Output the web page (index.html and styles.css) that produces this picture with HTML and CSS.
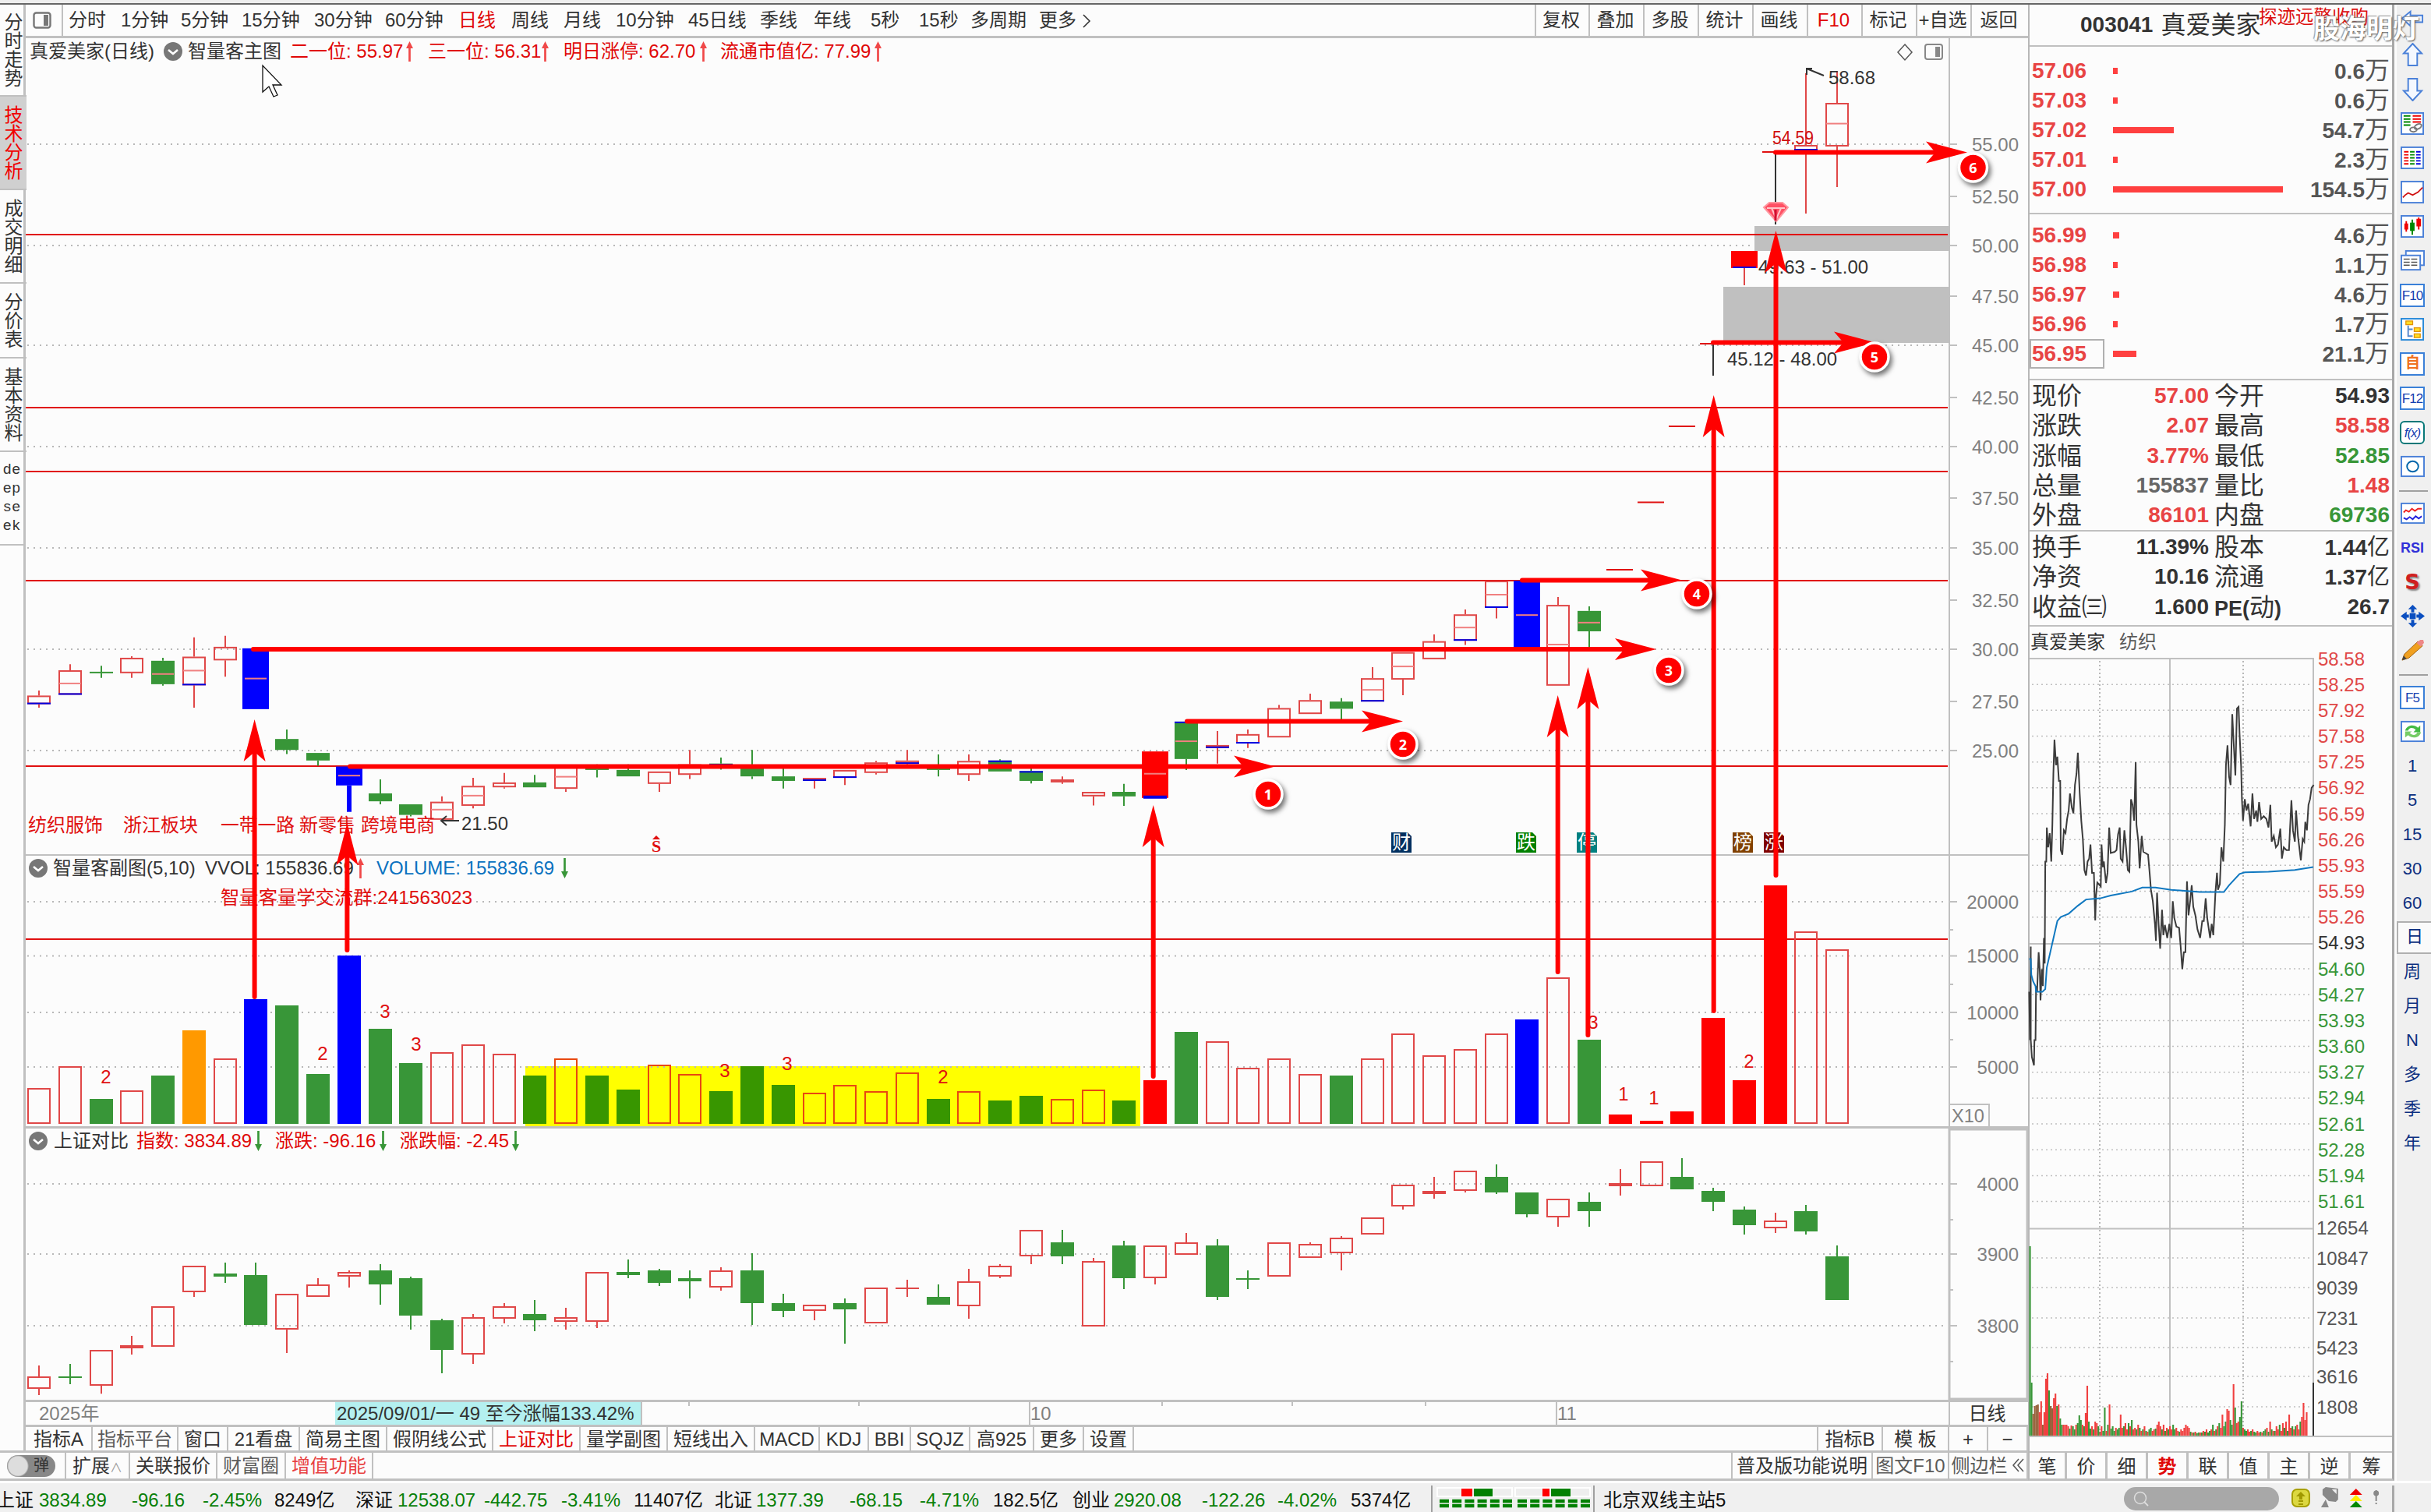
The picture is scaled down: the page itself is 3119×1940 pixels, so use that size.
FILE: index.html
```html
<!DOCTYPE html>
<html lang="zh-CN">
<head>
  <meta charset="UTF-8" />
  <meta name="viewport" content="width=device-width, initial-scale=1.0" />
  <title>真爱美家 003041 技术分析</title>
  <link rel="stylesheet" href="styles.css">
</head>
<body>
  <div class="app">
    <div class="top-strip"></div>

    <div class="main">
      <div class="left-col">
        <div class="workspace">
          <!-- Vertical page tabs -->
          <nav class="side-tabs">
            <div class="t1">分时走势</div>
            <div class="t2 active">技术分析</div>
            <div class="t2">成交明细</div>
            <div class="t3">分价表</div>
            <div class="t2">基本资料</div>
            <div class="t2 latin">de<br>ep<br>se<br>ek</div>
          </nav>

          <div class="charts">
            <div class="toolbar">
              <div class="tool-icon">
                <svg width="24" height="22" viewBox="0 0 24 22"><rect x="1.5" y="1.5" width="21" height="19" rx="3" fill="none" stroke="#777" stroke-width="2.4"/><rect x="14" y="4" width="6" height="14" fill="#777"/></svg>
              </div>
              <div class="periods">
                <span>分时</span><span>1分钟</span><span>5分钟</span><span>15分钟</span><span>30分钟</span><span>60分钟</span><span class="red">日线</span><span>周线</span><span>月线</span><span>10分钟</span><span>45日线</span><span>季线</span><span>年线</span><span>5秒</span><span>15秒</span><span>多周期</span><span>更多<svg width="14" height="20" viewBox="0 0 14 20"><path d="M3 2l8 8-8 8" fill="none" stroke="#333" stroke-width="1.6"/></svg></span>
              </div>
              <div class="actions">
                <span>复权</span><span>叠加</span><span>多股</span><span>统计</span><span>画线</span><span class="red">F10</span><span>标记</span><span>+自选</span><span>返回</span>
              </div>
            </div>

            <section class="panel price-panel">
              <svg id="price" viewBox="33 49 2569 1047"></svg>
              <div class="panel-head head-price">
                <span>真爱美家(日线)</span>
                <i class="dot"><svg width="24" height="24" viewBox="0 0 24 24"><path d="M6 10l6 5 6-5" fill="none" stroke="#fff" stroke-width="2.6"/></svg></i>
                <span>智量客主图</span>
                <span class="red">二一位: 55.97</span><i class="up"></i>
                <span class="red">三一位: 56.31</span><i class="up"></i>
                <span class="red">明日涨停: 62.70</span><i class="up"></i>
                <span class="red">流通市值亿: 77.99</span><i class="up"></i>
              </div>
            </section>

            <section class="panel volume-panel">
              <svg id="volume" viewBox="33 1098 2569 347"></svg>
              <div class="panel-head head-volume">
                <i class="dot"><svg width="24" height="24" viewBox="0 0 24 24"><path d="M6 10l6 5 6-5" fill="none" stroke="#fff" stroke-width="2.6"/></svg></i>
                <span>智量客副图(5,10)</span>
                <span>VVOL: 155836.69</span><i class="up"></i>
                <span class="blue">VOLUME: 155836.69</span><i class="down"></i>
              </div>
            </section>

            <section class="panel index-panel">
              <svg id="index" viewBox="33 1448 2569 348"></svg>
              <div class="panel-head head-index">
                <i class="dot"><svg width="24" height="24" viewBox="0 0 24 24"><path d="M6 10l6 5 6-5" fill="none" stroke="#fff" stroke-width="2.6"/></svg></i>
                <span>上证对比</span>
                <span class="red">指数: 3834.89</span><i class="down"></i>
                <span class="red">涨跌: -96.16</span><i class="down"></i>
                <span class="red">涨跌幅: -2.45</span><i class="down"></i>
              </div>
            </section>

            <div class="time-axis">
              <span class="muted year">2025年</span>
              <span class="range">2025/09/01/一 49 至今涨幅133.42%</span>
              <span class="tick"></span><span class="tick"></span>
              <span class="month">10</span>
              <span class="tick"></span><span class="tick"></span><span class="tick"></span>
              <span class="month">11</span>
              <span class="period">日线</span>
            </div>

            <div class="ind-tabs">
              <span>指标A</span><span class="soft">指标平台</span><span>窗口</span><span>21看盘</span><span>简易主图</span><span>假阴线公式</span><span class="red">上证对比</span><span>量学副图</span><span>短线出入</span><span>MACD</span><span>KDJ</span><span>BBI</span><span>SQJZ</span><span>高925</span><span>更多</span><span>设置</span>
              <span></span>
              <span>指标B</span><span>模 板</span><span>+</span><span>−</span>
            </div>
          </div>
        </div>

        <div class="ext-tabs">
          <span><i class="toggle">弹</i></span>
          <span>扩展<small>∧</small></span><span>关联报价</span><span class="soft">财富圈</span><span class="hot">增值功能</span>
          <span></span>
          <span>普及版功能说明</span><span class="soft">图文F10</span><span class="soft">侧边栏<svg width="22" height="18" viewBox="0 0 22 18"><path d="M14 1L7 9l7 8M20 1l-7 8 7 8" fill="none" stroke="#555" stroke-width="1.5"/></svg></span>
        </div>
      </div>

      <!-- Quote panel -->
      <aside class="quote">
        <div class="quote-title"><b>003041</b><span>真爱美家</span></div>
        <div class="book asks">
          <div class="lvl"><b>57.06</b><i><u style="width:6px"></u></i><em>0.6<span>万</span></em></div>
          <div class="lvl"><b>57.03</b><i><u style="width:6px"></u></i><em>0.6<span>万</span></em></div>
          <div class="lvl"><b>57.02</b><i><u style="width:78px"></u></i><em>54.7<span>万</span></em></div>
          <div class="lvl"><b>57.01</b><i><u style="width:6px"></u></i><em>2.3<span>万</span></em></div>
          <div class="lvl"><b>57.00</b><i><u style="width:218px"></u></i><em>154.5<span>万</span></em></div>
        </div>
        <div class="book bids">
          <div class="lvl"><b>56.99</b><i><u style="width:8px"></u></i><em>4.6<span>万</span></em></div>
          <div class="lvl"><b>56.98</b><i><u style="width:6px"></u></i><em>1.1<span>万</span></em></div>
          <div class="lvl"><b>56.97</b><i><u style="width:8px"></u></i><em>4.6<span>万</span></em></div>
          <div class="lvl"><b>56.96</b><i><u style="width:6px"></u></i><em>1.7<span>万</span></em></div>
          <div class="lvl boxed"><b>56.95</b><i><u style="width:30px"></u></i><em>21.1<span>万</span></em></div>
        </div>
        <div class="stats s1">
          <span>现价</span><b class="r">57.00</b><span>今开</span><b>54.93</b>
          <span>涨跌</span><b class="r">2.07</b><span>最高</span><b class="r">58.58</b>
          <span>涨幅</span><b class="r">3.77%</b><span>最低</span><b class="g">52.85</b>
          <span>总量</span><b class="s">155837</b><span>量比</span><b class="r">1.48</b>
          <span>外盘</span><b class="r">86101</b><span>内盘</span><b class="g">69736</b>
        </div>
        <div class="stats s2">
          <span>换手</span><b>11.39%</b><span>股本</span><b>1.44<span>亿</span></b>
          <span>净资</span><b>10.16</b><span>流通</span><b>1.37<span>亿</span></b>
          <span>收益㈢</span><b>1.600</b><span><b>PE(</b>动<b>)</b></span><b>26.7</b>
        </div>
        <div class="mini-title"><span>真爱美家</span><span class="soft">纺织</span></div>
        <svg id="intraday" viewBox="2604 844 465 1018"></svg>
        <div class="quote-tabs">
          <span>笔</span><span>价</span><span>细</span><span class="red strong">势</span><span>联</span><span>值</span><span>主</span><span>逆</span><span>筹</span>
        </div>
        <div class="notice">探迹远擎收购</div>
      </aside>

      <!-- Right tool strip -->
      <aside class="strip">
        <div><svg viewBox="0 0 32 32"><path d="M2 13L13 4v5h16v9H13v5z" fill="#f4f8ff" stroke="#4a80d8" stroke-width="2"/></svg></div>
        <div><svg viewBox="0 0 32 32"><path d="M16 1L28 14h-6v16H10V14H4z" fill="#f4f8ff" stroke="#4a80d8" stroke-width="2"/></svg></div>
        <div><svg viewBox="0 0 32 32"><path d="M16 31L28 18h-6V2H10v16H4z" fill="#f4f8ff" stroke="#4a80d8" stroke-width="2"/></svg></div>
        <div><svg viewBox="0 0 32 32"><rect x="1" y="2" width="29" height="28" fill="#fff" stroke="#4a80d8" stroke-width="2"/><path d="M4 6h9M4 10h9M4 14h9M4 18h9" stroke="#080" stroke-width="2"/><path d="M16 6h11M16 10h11M16 14h11" stroke="#e00" stroke-width="2"/><ellipse cx="17" cy="24" rx="4.500" ry="3" fill="#fff" stroke="#777" stroke-width="2"/><ellipse cx="23" cy="20" rx="5" ry="3" fill="none" stroke="#777" stroke-width="2" transform="rotate(-30 23 20)"/></svg></div>
        <div><svg viewBox="0 0 32 32"><rect x="1" y="2" width="29" height="28" fill="#fff" stroke="#4a80d8" stroke-width="2"/><path d="M7.500 7v18" stroke="#e00" stroke-width="6" stroke-dasharray="2 2"/><path d="M15.500 7v18" stroke="#080" stroke-width="6" stroke-dasharray="2 2"/><path d="M23.500 7v18" stroke="#00d" stroke-width="6" stroke-dasharray="2 2"/></svg></div>
        <div><svg viewBox="0 0 32 32"><rect x="1" y="2" width="29" height="28" fill="#fff" stroke="#4a80d8" stroke-width="2"/><path d="M3 23l3-3 4-3 6 3 7-4 6-6" fill="none" stroke="#d01010" stroke-width="1.800"/></svg></div>
        <div><svg viewBox="0 0 32 32"><rect x="1" y="2" width="29" height="28" fill="#fff" stroke="#4a80d8" stroke-width="2"/><path d="M7.500 9v14M24 4v16" stroke="#e00" stroke-width="2"/><path d="M15.500 7v20" stroke="#080" stroke-width="2"/><path d="M5 12h5v8H5zM21 6h6v10h-6z" fill="#e00"/><path d="M12.500 11h6v11h-6z" fill="#080"/></svg></div>
        <div><svg viewBox="0 0 32 32"><rect x="7" y="3" width="24" height="19" fill="#fff" stroke="#4a80d8" stroke-width="2"/><rect x="1" y="9" width="25" height="19" fill="#fff" stroke="#4a80d8" stroke-width="2"/><path d="M4 14h8M14 14h8M4 18h8M14 18h8M4 22h8M14 22h8" stroke="#555" stroke-width="1.600"/></svg></div>
        <div><span class="key">F10</span></div>
        <div><svg viewBox="0 0 32 32"><rect x="1" y="2" width="29" height="28" fill="#fff" stroke="#2a8ad8" stroke-width="2"/><path d="M7 5h9v5H7zM18 14h8v5h-8zM18 22h8v5h-8z" fill="#fd2" stroke="#e09000" stroke-width="1.300"/><path d="M10 11v14h6M10 16h6" fill="none" stroke="#58c" stroke-width="2"/></svg></div>
        <div><span class="key orange">自</span></div>
        <div><span class="key">F12</span></div>
        <div><span class="key fx">f(x)</span></div>
        <div><svg viewBox="0 0 32 32"><rect x="1" y="3" width="30" height="26" fill="#fff" stroke="#4a80d8" stroke-width="2"/><ellipse cx="16" cy="16" rx="7.500" ry="7" fill="none" stroke="#06a" stroke-width="2"/></svg></div>
        <hr>
        <div><svg viewBox="0 0 32 32"><rect x="1" y="3" width="30" height="26" fill="#fff" stroke="#4a80d8" stroke-width="2"/><path d="M4 15l3-3 4 2 4-4 4 3 4-3 5 0" fill="none" stroke="#e22" stroke-width="2"/><path d="M4 22l4 2 4-3 4 3 4-4 4 3 4-3" fill="none" stroke="#22d" stroke-width="2"/></svg></div>
        <div><span class="rsi">RSI</span></div>
        <div><span class="money">S</span></div>
        <div><svg viewBox="0 0 32 32"><path d="M16 1l6 6h-4v4h-4V7h-4zM16 31l6-6h-4v-4h-4v4h-4zM0 16l8-6v4h3v4H8v4zM32 16l-8-6v4h-3v4h3v4z" fill="#0b4fc0"/><rect x="12" y="12" width="8" height="8" fill="#0b4fc0"/></svg></div>
        <div><svg viewBox="0 0 32 32"><path d="M2 29l3-8L23 4l6 6L11 26z" fill="#f0a020" stroke="#a06010" stroke-width="1"/><path d="M21 6l5-4h4l1 4-4 5z" fill="#e88"/><path d="M2 29l2-6 4 4z" fill="#444"/></svg></div>
        <hr>
        <div><span class="key">F5</span></div>
        <div><svg viewBox="0 0 32 32"><rect x="1" y="3" width="30" height="26" fill="#fff" stroke="#4a80d8" stroke-width="2"/><path d="M6 15c2-8 12-9 17-4l3-3v9h-9l3-3c-4-4-9-3-10 1z" fill="#4b4"/><path d="M27 17c-2 8-12 9-17 4l-4 3v-8h9l-3 2c4 4 9 3 10-1z" fill="#7c6"/></svg></div>
        <div>1</div><div>5</div><div>15</div><div>30</div><div>60</div>
        <div class="on">日</div><div>周</div><div>月</div><div>N</div><div>多</div><div>季</div><div>年</div>
      </aside>
    </div>

    <footer class="status">
      <div class="quotes">
        <span>上证</span><span class="g">3834.89</span><span class="g">-96.16</span><span class="g">-2.45%</span><span>8249亿</span>
        <span>深证</span><span class="g">12538.07</span><span class="g">-442.75</span><span class="g">-3.41%</span><span>11407亿</span>
        <span>北证</span><span class="g">1377.39</span><span class="g">-68.15</span><span class="g">-4.71%</span><span>182.5亿</span>
        <span>创业</span><span class="g">2920.08</span><span class="g">-122.26</span><span class="g">-4.02%</span><span>5374亿</span>
      </div>
      <div class="leds">
        <svg width="200" height="32" viewBox="1842 1906 200 32">
          <path d="M1844 1909h96v11h-96zM1944 1909h96v11h-96z" fill="#eee" stroke="#fff" stroke-width="2"/>
          <path d="M1875 1910h14v10h-14zM1979 1910h9v10h-9z" fill="#f00"/>
          <path d="M1891 1910h24v10h-24zM1990 1910h25v10h-25z" fill="#008000"/>
          <path d="M1847 1926h93M1947 1926h93M1847 1932h93M1947 1932h93" stroke="#008000" stroke-width="4.500" stroke-dasharray="12 4.200"/>
        </svg>
      </div>
      <div class="site">北京双线主站5</div>
      <div class="tray">
        <div class="search"><svg width="22" height="22" viewBox="0 0 22 22"><circle cx="9" cy="9" r="7.500" fill="none" stroke="#ddd" stroke-width="1.500"/><path d="M14 14l5 5" stroke="#ddd" stroke-width="1.800"/></svg></div>
        <svg width="130" height="34" viewBox="2940 1906 130 34">
          <rect x="2942" y="1911" width="22" height="22" rx="6" fill="#dcd840" stroke="#a8a000" stroke-width="2"/><path d="M2953 1914l6 6h-4v4h-4v-4h-4z" fill="#a09800"/><path d="M2950 1926h6M2950 1930h6" stroke="#a09800" stroke-width="2"/>
          <path d="M2981 1911l4-3 16 2v14l-3 3-9-1-8-8z" fill="#888"/><path d="M2993 1911h6v6z" fill="#f0f0f0"/><path d="M2979 1934h10l-4-10z" fill="#888"/>
          <path d="M3024 1910l8 8h-16z" fill="#e00"/><path d="M3024 1918l8 8h-16z" fill="#fe0"/><path d="M3024 1926l8 8h-16z" fill="#080"/>
          <circle cx="3050" cy="1916" r="3.500" fill="#888"/><path d="M3050 1912v14M3050 1928v2" stroke="#888" stroke-width="2"/>
        </svg>
      </div>
    </footer>

    <!-- Drawn annotations, over every panel -->
    <svg id="notes" class="notes" viewBox="0 0 3119 1940"></svg>
    <div class="watermark">股海明灯</div>
  </div>
  <script src="charts.js"></script>
</body>
</html>
```

FILE: styles.css
```css
* {
  box-sizing: border-box;
}
body {
  margin: 0;
  background: #fcfcfc;
  color: #333;
  font-family: "Liberation Sans", "Noto Sans CJK SC", sans-serif;
  font-size: 24px;
  line-height: 28px;
  white-space: nowrap;
  overflow: hidden;
}
i, em, u {
  font-style: normal;
  text-decoration: none;
}
svg {
  display: block;
}
svg text {
  font-size: 24px;
  white-space: pre;
}
.red {
  color: #e00808;
}
.blue {
  color: #0a72c0;
}
.soft {
  color: #5a5a5a;
}
.muted {
  color: #808080;
}
.hot {
  color: #e84040;
}
.app {
  position: relative;
  width: 3119px;
  height: 1940px;
  display: flex;
  flex-direction: column;
}
.top-strip {
  height: 6px;
  background: #eee;
  border-bottom: 2px solid #666;
}
.main {
  display: flex;
  height: 1894px;
}
.left-col {
  width: 2602px;
}
.workspace {
  display: flex;
  height: 1858px;
  border-bottom: 3px solid #c0c0c0;
}

/* left tabs */
.side-tabs {
  width: 33px;
  border-right: 3px solid #c0c0c0;
}
.side-tabs div {
  display: flex;
  align-items: center;
  justify-content: center;
  border-bottom: 2px solid #c0c0c0;
  writing-mode: vertical-rl;
  text-orientation: upright;
  line-height: 30px;
  padding-right: 4px;
}
.side-tabs .t1 {
  height: 118px;
}
.side-tabs .t2 {
  height: 120px;
}
.side-tabs .t3 {
  height: 96px;
}
.side-tabs .active {
  background: #d0d0d0;
  color: #f00000;
}
.side-tabs .latin {
  writing-mode: horizontal-tb;
  font-family: "Liberation Mono", monospace;
  font-size: 19px;
  line-height: 24px;
  padding-right: 0;
}

/* toolbar */
.charts {
  width: 2569px;
}
.toolbar {
  display: flex;
  height: 43px;
  border-bottom: 3px solid #c0c0c0;
  line-height: 40px;
}
.tool-icon {
  width: 48px;
  padding: 9px 0 0 9px;
  border-right: 2px solid #c0c0c0;
}
.periods {
  display: grid;
  grid-template-columns: 67px 77px 78px 93px 91px 94px 68px 67px 67px 93px 92px 69px 73px 62px 66px 88px 80px;
  padding-left: 7px;
  flex: 1;
}
.periods svg {
  display: inline-block;
  vertical-align: -3px;
  margin-left: 6px;
}
.actions {
  display: grid;
  grid-template-columns: 69px repeat(7, 70px) 74px;
  text-align: center;
}
.actions span {
  border-left: 2px solid #c0c0c0;
  padding-right: 3px;
}

/* chart panels: svg and head share one cell */
.panel {
  display: grid;
}
.panel > * {
  grid-area: 1 / 1;
}
.panel > svg {
  width: 2569px;
  height: 100%;
}
.price-panel {
  height: 1047px;
}
.volume-panel {
  height: 349px;
  border-top: 2px solid #c0c0c0;
}
.index-panel {
  height: 351px;
  border-top: 3px solid #c0c0c0;
}
.panel-head {
  display: grid;
  align-items: center;
  height: 32px;
}
.head-price {
  grid-template-columns: 172px 31px 131px 146px 31px 143px 31px 172px 29px 195px 20px;
  padding: 2px 0 0 5px;
}
.head-volume {
  grid-template-columns: 31px 195px 190px 30px 228px 20px;
  padding-left: 4px;
}
.head-index {
  grid-template-columns: 32px 106px 149px 29px 131px 29px 141px 20px;
  padding-left: 4px;
}
.dot {
  width: 24px;
  height: 24px;
  border-radius: 50%;
  background: #777;
}
.up, .down {
  width: 9px;
  height: 26px;
  margin-left: 3px;
  background: #f04848;
  clip-path: polygon(50% 0, 100% 9px, 65% 9px, 65% 100%, 35% 100%, 35% 9px, 0 9px);
}
.down {
  background: #389638;
  clip-path: polygon(35% 0, 65% 0, 65% 17px, 100% 17px, 50% 100%, 0 17px, 35% 17px);
}
.head-volume .up {
  margin-left: 5px;
}
.head-volume .down {
  margin-left: 9px;
}

/* time axis and tab rows */
.time-axis {
  display: grid;
  grid-template-columns: 397px 453px 218px 219px 170px 167px 171px 168px 504px 102px;
  height: 35px;
  border-top: 3px solid #c0c0c0;
  border-bottom: 3px solid #c0c0c0;
  line-height: 29px;
  color: #808080;
}
.time-axis .year {
  padding-left: 17px;
}
.time-axis .range {
  width: 394px;
  padding-left: 2px;
  background: #b4f0f0;
  border-right: 2px solid #c0c0c0;
  color: #333;
}
.tick {
  height: 5px;
  border-left: 2px solid #c0c0c0;
}
.month {
  border-left: 2px solid #c0c0c0;
}
.period {
  border-left: 2px solid #c0c0c0;
  padding-right: 5px;
  text-align: center;
  color: #333;
}
.ind-tabs {
  display: grid;
  grid-template-columns: 86px 110px 64px 92px 112px 136px 112px 112px 112px 83px 63px 54px 76px 82px 64px 64px 878px 83px 85px 50px 51px;
  height: 32px;
  line-height: 31px;
  text-align: center;
}
.ind-tabs span, .ext-tabs > span {
  border-right: 2px solid #c0c0c0;
}
.ext-tabs {
  display: grid;
  grid-template-columns: 85px 82px 112px 88px 112px 1744px 180px 98px 101px;
  height: 36px;
  line-height: 33px;
  text-align: center;
  border-bottom: 3px solid #c0c0c0;
}
.ext-tabs small {
  font-size: 16px;
  color: #999;
}
.ext-tabs svg {
  display: inline-block;
}
.toggle {
  display: block;
  width: 62px;
  height: 28px;
  margin: 3px 0 0 9px;
  border-radius: 14px;
  background: radial-gradient(circle at 14px 14px, #ddd 12px, #888 14px);
  font-size: 20px;
  line-height: 27px;
  text-align: right;
  padding-right: 8px;
}

/* quote panel */
.quote {
  position: relative;
  width: 470px;
  border-left: 2px solid #b8b8b8;
  border-right: 3px solid #a8a8a8;
  border-bottom: 3px solid #c0c0c0;
}
.quote b {
  font-size: 28px;
}
.quote-title {
  display: flex;
  gap: 10px;
  height: 54px;
  padding-left: 65px;
  line-height: 52px;
  font-size: 32px;
  border-bottom: 2px solid #c0c0c0;
}
.book {
  height: 215px;
  padding-top: 12px;
  border-bottom: 2px solid #c0c0c0;
}
.bids {
  height: 213px;
  padding-top: 8px;
}
.lvl {
  display: grid;
  grid-template-columns: 107px 230px 1fr;
  align-items: center;
  height: 38px;
  padding-right: 3px;
}
.lvl b {
  padding-left: 3px;
  color: #e84444;
  line-height: 34px;
}
.lvl u {
  display: block;
  height: 8px;
  background: #ff4040;
}
.lvl em {
  justify-self: end;
  font-weight: bold;
  font-size: 28px;
  color: #555;
}
.lvl em span {
  font-size: 32px;
  font-weight: normal;
}
.boxed b {
  width: 96px;
  border: 2px solid #b0b0b0;
  padding-left: 1px;
}
.stats {
  display: grid;
  grid-template-columns: 80px 147px 90px 1fr;
  grid-auto-rows: 38.300px;
  line-height: 36px;
  padding: 2px 3px 0 3px;
  font-size: 32px;
  border-bottom: 2px solid #c0c0c0;
}
.stats > span {
  width: 100px;
}
.stats > b {
  text-align: right;
}
.stats > span:nth-of-type(even) {
  padding-left: 7px;
}
.stats b span {
  font-size: 29px;
  font-weight: normal;
}
.stats span b {
  font-size: 27px;
}
.s1 {
  height: 194px;
}
.s2 {
  height: 122px;
}
.r {
  color: #e84444;
}
.g {
  color: #389638;
}
.s {
  color: #666;
}
.mini-title {
  display: flex;
  gap: 18px;
  height: 40px;
  padding-left: 1px;
  line-height: 40px;
}
#intraday {
  width: 465px;
  height: 1018px;
  overflow: visible;
}
.quote-tabs {
  display: grid;
  grid-template-columns: 48px repeat(7, 52px) 53px;
  height: 38px;
  line-height: 35px;
  text-align: center;
  border-top: 2px solid #c0c0c0;
}
.quote-tabs span {
  border-right: 3px solid #c0c0c0;
}
.quote-tabs span:last-child {
  border: none;
}
.strong {
  font-weight: bold;
}
.notice {
  position: absolute;
  left: 294px;
  top: 1px;
  font-size: 23.500px;
  line-height: 30px;
  color: #dc1010;
}

/* right strip */
.strip {
  width: 47px;
  padding-right: 4px;
  background: #f0f0f0;
  border-left: 3px solid #fcfcfc;
  color: #0c2f80;
  font-size: 22px;
}
.strip div {
  display: flex;
  align-items: center;
  justify-content: center;
  height: 44px;
  padding-bottom: 3px;
}
.strip svg {
  width: 31px;
  height: 31px;
}
.strip hr {
  height: 2px;
  margin: 7px 0 7px 3px;
  border: none;
  background: #a0a0a0;
}
.strip .on {
  width: 44px;
  height: 42px;
  margin-bottom: 2px;
  background: #fafafa;
  border: 2px solid #b0b0b0;
  border-right: none;
}
.key {
  width: 32px;
  height: 30px;
  border: 2px solid #3a80d8;
  background: #fff;
  font-size: 17px;
  letter-spacing: -1px;
  line-height: 27px;
  text-align: center;
  color: #1540b0;
}
.orange {
  color: #f07020;
  font-size: 19px;
  line-height: 24px;
  font-weight: bold;
}
.fx {
  border-color: #087878;
  border-radius: 6px;
  font-style: italic;
}
.rsi {
  font-size: 18px;
  font-weight: bold;
  color: #3030d8;
}
.money {
  font-family: "DejaVu Sans", sans-serif;
  font-weight: bold;
  font-size: 27px;
  color: #d02020;
  text-shadow: 2px 2px 2px #888;
}

/* status bar */
.status {
  display: flex;
  height: 40px;
  padding-top: 3px;
  background: #f0f0f0;
  border-top: 3px solid #fff;
  color: #111;
  line-height: 38px;
}
.quotes {
  display: grid;
  grid-template-columns: 55px 119px 91px 92px 104px 54px 111px 99px 93px 104px 53px 120px 90px 94px 102px 53px 113px 97px 94px 104px;
  width: 1843px;
  margin-left: -5px;
  border-right: 2px solid #a0a0a0;
}
.quotes .g {
  color: #088008;
}
.leds {
  width: 208px;
  padding-left: 4px;
  border-right: 2px solid #a0a0a0;
}
.site {
  width: 679px;
  padding-left: 11px;
}
.tray {
  display: flex;
  gap: 15px;
  width: 347px;
  border-right: 3px solid #a8a8a8;
}
.search {
  width: 200px;
  height: 30px;
  margin-top: 2px;
  padding: 5px 0 0 12px;
  border-radius: 15px;
  background: #a8a8a8;
}

/* layers on top */
.notes {
  position: absolute;
  left: 0;
  top: 0;
  width: 3119px;
  height: 1940px;
  pointer-events: none;
}
.notes .num {
  font-family: "Noto Sans", sans-serif;
  font-weight: bold;
  font-size: 18px;
  fill: #fff;
  text-anchor: middle;
}
.badge {
  fill: #f00;
  stroke: #fff;
  stroke-width: 3.500;
  filter: drop-shadow(3px 4px 3px rgba(0, 0, 0, 0.55));
}
.watermark {
  position: absolute;
  left: 2968px;
  top: 14px;
  font-size: 34px;
  line-height: 46px;
  font-weight: bold;
  color: #fff;
  text-shadow: 1px 1px 2px #555, -1px -1px 1px #999;
}
```

FILE: charts.js
```js
const RED = "#e04848", GREEN = "#389638", BLUE = "#0000ff", HOT = "#ff0000", LINE = "#c0c0c0";
const barX = i => 50 + Math.round(i * 39.78);

const rect = (x, y, w, h, fill, extra = "") =>
  `<rect x="${x}" y="${y}" width="${w}" height="${h}" fill="${fill}" ${extra}/>`;
const line = (x1, y1, x2, y2, color, w = 2, extra = "") =>
  `<line x1="${x1}" y1="${y1}" x2="${x2}" y2="${y2}" stroke="${color}" stroke-width="${w}" ${extra}/>`;
// cy is the middle of the digits
const text = (x, cy, s, color = "#333", len = 0, extra = "") =>
  `<text x="${x}" y="${cy + 8.5}" fill="${color}" ${len ? `textLength="${len}" lengthAdjust="spacingAndGlyphs"` : ""} ${extra}>${s}</text>`;
const dots = (y, x2 = 2499) => line(35, y, x2, y, "#b8b8b8", 2, 'stroke-dasharray="2 6"');
const fill = (id, parts) => { document.getElementById(id).innerHTML = parts.join(""); };

function axis(labels, minor) {
  const out = [line(2501, 0, 2501, 1800, LINE, 2)];
  labels.forEach(([y, s]) => {
    out.push(line(2501, y, 2511, y, LINE));
    out.push(text(2590, y, s, "#808080", 0, 'text-anchor="end"'));
  });
  minor.forEach(y => out.push(line(2501, y, 2506, y, LINE)));
  return out;
}

// kind: o hollow, r solid red, g green, b wide blue, R wide red
function candle(i, kind, hi, top, bot, lo, o = {}) {
  const x = barX(i), out = [];
  const c = kind === "g" ? GREEN : kind === "b" ? BLUE : kind === "R" ? HOT : RED;
  const half = kind === "b" || kind === "R" ? 17 : 15;
  const h = Math.max(bot - top, 2);
  if (hi < top) out.push(line(x, hi, x, top, c));
  if (lo > bot) out.push(line(x, bot, x, lo, c, kind === "b" ? 6 : 2));
  if (kind === "o") out.push(rect(x - 14, top + 1, 28, Math.max(h - 2, 1), "none", `stroke="${c}" stroke-width="2"`));
  else out.push(rect(x - half, top, half * 2, h, c));
  if (o.mid) out.push(line(x - 14, o.mid, x + 14, o.mid, "#f08080"));
  if (o.low) out.push(line(x - 15, bot - 1, x + 15, bot - 1, "#0000e0", kind === "R" ? 4 : 2));
  if (o.cap) out.push(line(x - 15, top + 1, x + 15, top + 1, "#0000e0"));
  return out.join("");
}

/* ---------- price ---------- */
// [kind, high, top, bottom, low, mid, edge]
const prices = [
  ["o",384,397,420,429,0,"l"],["o",314,330,395,395,365,"l"],["g",318,334,338,350],["o",293,297,338,350],
  ["g",297,305,367,371,340],["o",243,294,370,429,331,"l"],["o",239,268,304,347],["b",272,272,433,433,352],
  ["g",487,512,541,552],["g",549,549,569,583],["b",585,585,635,705,609],["g",619,656,677,685],
  ["g",685,685,713,717],["o",664,678,726,726,699],["o",615,636,689,696,662],["o",602,627,640,643],
  ["g",607,627,640,640],["o",585,585,644,652,612],["g",579,589,594,614],["g",579,594,611,611],
  ["o",598,598,631,652],["o",541,579,607,618],["g",561,577,582,593,0,"l"],["g",541,585,611,618],
  ["g",590,611,623,643],["o",615,615,623,643,0,"l"],["o",594,594,615,634,0,"l"],["o",570,574,602,606],
  ["o",541,569,578,580,0,"l"],["g",553,589,594,611],["o",553,570,607,623],["g",566,569,598,598,0,"c"],
  ["g",590,597,623,630,0,"c"],["r",611,619,627,631],["o",652,652,664,688],["g",631,652,664,689],
  ["R",545,545,668,668,604,"l"],["g",466,466,565,594,518,"c"],["o",491,528,536,577,0,"l"],["o",487,499,524,536,0,"l"],
  ["o",422,430,508,508],["o",392,409,446,446],["g",404,413,432,460],["o",322,351,413,413,382,"l"],
  ["o",282,282,355,396,320],["o",235,253,301,301],["o",169,182,252,263,217,"l"],["o",93,93,165,193,130,"l"],
  ["b",93,93,270,270,184],["o",136,157,371,371,262],["g",161,173,227,268,204]
];
const py = v => v ? 700 + v / 2.0632 : 0;

const price = [];
[185, 315, 443, 573, 703, 833, 963].forEach(y => price.push(dots(y)));
price.push(rect(2251, 290, 249, 32, "#c0c0c0"), rect(2211, 368, 289, 72, "#c0c0c0"));
[301, 523, 605, 745, 983].forEach(y => price.push(line(33, y, 2499, y, "#e01010", 2)));
prices.forEach(([k, h, t, b, l, m, e], i) =>
  price.push(candle(i, k, py(h), py(t), py(b), py(l), { mid: py(m), low: e === "l", cap: e === "c" })));
price.push(
  line(2061, 731, 2095, 731, "#e01010"), line(2101, 644.5, 2135, 644.5, "#e01010"), line(2141, 547, 2175, 547, "#e01010"),
  line(2181, 441, 2212, 441, "#e01010"), line(2198, 441, 2198, 482, "#333"),
  line(2261, 195, 2294, 195, "#e01010"), line(2278, 195, 2278, 288, "#333"),
  candle(55, "R", 322, 322, 344, 344, { }), line(2223, 343, 2253, 343, "#0000e0"), line(2238, 344, 2238, 366, RED),
  candle(57, "o", 94, 186, 193, 274, { low: true }),
  candle(58, "o", 91, 132, 188, 240, { mid: 158.600 }),
  `<path d="M2325 88h-7v8M2318 88l22 9" fill="none" stroke="#333" stroke-width="2"/>`,
  text(2346, 99, "58.68", "#333", 60), text(2274, 176, "54.59", "#d01010", 53),
  text(2256, 342, "49.63 - 51.00", "#333", 141), text(2216, 460, "45.12 - 48.00", "#333", 141),
  `<path d="M2263 266l7-6h17l7 6-15 18z" fill="#ff5064" stroke="#ff98a0" stroke-width="2"/><path d="M2267 267h23M2273 267l6 14 6-14" fill="none" stroke="#ffc4c8" stroke-width="2"/><path d="M2278 269v14" stroke="#d01030" stroke-width="3"/>`,
  `<path d="M2444 57l9 10-9 10-9-10z" fill="none" stroke="#555" stroke-width="1.500"/><rect x="2470" y="57" width="22" height="19" rx="3" fill="none" stroke="#888" stroke-width="2"/><rect x="2483" y="60" width="6" height="13" fill="#888"/>`,
  text(36, 1058, "纺织服饰", "#e01010", 96), text(158, 1058, "浙江板块", "#e01010", 96), text(283, 1058, "一带一路", "#e01010", 95),
  text(384, 1058, "新零售", "#e01010", 72), text(463, 1058, "跨境电商", "#e01010", 95), text(592, 1056, "21.50", "#333", 60),
  `<path d="M589 1053h-23M573 1047l-7 6 7 6" fill="none" stroke="#333" stroke-width="2"/>`,
  `<text x="842" y="1093" fill="#e01010" text-anchor="middle" style="font:bold 22px 'Liberation Serif',serif">S</text><path d="M837 1077l5-5 5 5z" fill="#e01010"/>`
);
[[1785, "财", "#003060"], [1945, "跌", "#008000"], [2023, "停", "#008080"], [2223, "榜", "#804000"], [2263, "涨", "#800000"]].forEach(([x, s, c]) => {
  price.push(`<path d="M${x} 1068h21l5 5v21h-26z" fill="${c}"/>`, text(x + 1, 1080.500, s, "#fff", 24));
});
price.push(...axis(
  [[185, "55.00"], [315, "50.00"], [443, "45.00"], [573, "40.00"], [703, "35.00"], [833, "30.00"], [963, "25.00"],
   [252, "52.50"], [380, "47.50"], [510, "42.50"], [639, "37.50"], [770, "32.50"], [900, "27.50"]], []));
fill("price", price);

/* ---------- volume ---------- */
// kind + top edge; y hollow red, g green, b blue, n orange, R solid red
const vols = ["y1396","y1368","g1410","y1399","g1380","n1322","y1358","b1282","g1290","g1378","b1226","g1320","g1364","y1350","y1340","y1352",
  "g1380","y1358","g1380","g1398","y1366","y1378","g1400","g1368","g1392","y1402","y1392","y1400","y1376","g1410","y1400","g1412","g1406","y1410","y1398","g1412",
  "R1386","g1324","y1336","y1370","y1358","y1378","g1380","y1358","y1326","y1354","y1346","y1326","b1308","y1254","g1334",
  "R1430","R1438","R1426","R1306","R1386","R1136","y1195","y1218"];
const volColor = { g: GREEN, b: BLUE, n: "#ff9900", R: HOT };
const volume = [rect(674, 1368, 789, 78, "#ffff00")];
[1157, 1226.500, 1299, 1369].forEach(y => volume.push(dots(y)));
volume.push(line(33, 1205, 2499, 1205, "#e01010"));
vols.forEach((v, i) => {
  const y = +v.slice(1), x = barX(i), lit = i >= 16 && i <= 35;
  if (v[0] === "y") volume.push(rect(x - 14, y + 1, 28, 1440 - y, "none", `stroke="${lit ? "#e84810" : RED}" stroke-width="2"`));
  else volume.push(rect(x - 15, y, 30, 1442 - y, lit ? "#389600" : volColor[v[0]]));
});
[[136,1381,2],[414,1351,2],[494,1297,3],[534,1339,3],[930,1373,3],[1010,1364,3],[1210,1381,2],[2044,1311,3],[2083,1403,1],[2122,1408,1],[2244,1361,2]]
  .forEach(([x, y, n]) => volume.push(text(x, y, n, "#e01010", 0, 'text-anchor="middle"')));
volume.push(text(283, 1151, "智量客量学交流群:241563023", "#e01010", 323));
volume.push(...axis([[1157, "20000"], [1226.500, "15000"], [1299, "10000"], [1369, "5000"]], [1193, 1263, 1334]));
volume.push(rect(2501, 1417, 51, 29, "none", `stroke="${LINE}" stroke-width="2"`), text(2504, 1431, "X10", "#808080", 42));
fill("volume", volume);

/* ---------- index ---------- */
const indices = [
  ["o",936,978,1026,1050],["g",930,978,984,1008],["o",876,876,1014,1045],["r",822,858,870,894],["o",708,708,864,864],["o",552,552,654,672],
  ["g",540,582,594,618],["g",540,588,780,780],["o",660,660,798,888],["o",600,624,672,672],["o",570,576,594,636],["g",546,570,624,702],
  ["g",594,600,744,798],["g",756,762,876,966],["o",738,750,894,930],["o",696,708,756,774],["g",684,738,762,804],["o",714,750,768,798],
  ["o",576,576,768,792],["g",528,576,588,600],["g",564,570,618,630],["g",570,600,612,678],["o",558,570,636,648],["g",504,570,696,780],
  ["g",660,696,726,750],["o",702,702,726,762],["g",678,696,720,852],["o",636,636,774,774],["r",606,636,642,672],["g",624,672,702,702],
  ["o",564,612,708,756],["o",546,552,594,600],["o",414,414,516,546],["g",414,462,516,546],["o",522,534,786,786],["g",456,474,600,642],
  ["o",474,474,600,624],["o",426,462,510,510],["g",450,474,672,684],["g",570,600,606,642],["o",462,462,594,594],["o",462,468,522,522],
  ["o",438,444,504,570],["o",366,366,432,432],["o",240,240,324,336],["r",210,264,276,294],["o",186,186,264,270],["g",162,210,270,276],
  ["g",270,270,354,366],["o",294,294,366,402],["g",270,306,342,402],["r",180,234,246,282],["o",150,150,246,246],["g",138,210,258,258],
  ["g",252,264,306,342],["g",324,336,396,432],["o",348,378,408,426],["g",318,342,420,432],["g",474,516,684,684]
];
const iy = v => 1440 + v / 3;
const index = [1519, 1609, 1701].map(y => dots(y));
indices.forEach(([k, h, t, b, l], i) => index.push(candle(i, k, iy(h), iy(t), iy(b), iy(l))));
index.push(...axis([[1519, "4000"], [1609, "3900"], [1701, "3800"]], [1565, 1655, 1747]));
index.push(rect(2501, 1449, 100, 346, "none", `stroke="${LINE}" stroke-width="3"`));
fill("index", index);

/* ---------- intraday ---------- */
const ticks = "58.58 58.25 57.92 57.58 57.25 56.92 56.59 56.26 55.93 55.59 55.26 54.93 54.60 54.27 53.93 53.60 53.27 52.94 52.61 52.28 51.94 51.61".split(" ");
const day = [];
ticks.forEach((s, i) => {
  const y = 845 + i * 33.170;
  if (i && i !== 11) day.push(line(2607, y, 2966, y, "#c0c0c0", 1.500, 'stroke-dasharray="2 4"'));
  day.push(text(2974, y, s, i < 11 ? RED : i > 11 ? GREEN : "#333", 60));
});
[[1575, 12654], [1614, 10847], [1652, 9039], [1691, 7231], [1729, 5423], [1766, 3616], [1805, 1808]].forEach(([y, n], i) => {
  if (i) day.push(line(2607, y, 2966, y, "#c0c0c0", 1.500, 'stroke-dasharray="2 4"'));
  day.push(text(2972, y, n, "#555"));
});
day.push(
  line(2694, 848, 2694, 1842, "#b8b8b8", 2, 'stroke-dasharray="2 3"'), line(2878, 848, 2878, 1842, "#b8b8b8", 2, 'stroke-dasharray="2 3"'),
  line(2784, 845, 2784, 1842, LINE), line(2604, 845, 2969, 845, LINE), line(2968, 845, 2968, 1842, LINE),
  line(2604, 1211, 2968, 1211, LINE), line(2604, 1576.500, 2968, 1576.500, LINE), line(2604, 1843, 3069, 1843, LINE));

const trace = "40,650 43,735 46,570 46,735 50,765 58,780 60,735 64,735 66,640 70,650 76,580 80,610 83,665 88,610 92,640 96,555 99,600 101,420 105,420 107,360 112,395 118,370 124,420 128,355 132,265 136,205 142,250 147,235 153,278 158,278 160,400 166,408 172,365 178,370 184,345 190,330 195,300 202,325 208,335 214,285 220,265 225,228 232,300 238,348 244,380 250,435 256,445 262,420 268,415 273,390 279,440 286,440 291,524 294,480 299,457 312,464 315,390 320,430 324,420 332,458 338,440 344,360 350,405 365,403 372,400 378,372 384,360 388,415 395,420 402,365 408,395 415,435 421,438 427,310 433,320 439,348 445,245 448,355 455,385 460,432 468,375 474,403 482,405 492,408 498,440 503,470 510,490 518,530 522,560 526,475 532,530 538,574 545,505 550,550 556,532 565,555 573,530 580,555 586,490 592,520 600,535 610,537 616,570 622,610 628,580 634,580 640,455 646,515 652,490 658,462 664,500 672,515 680,540 690,555 698,525 704,525 711,485 717,520 728,555 734,530 740,550 748,475 754,440 758,470 765,460 771,395 778,420 784,355 788,250 794,215 800,270 806,285 812,160 818,215 824,268 830,150 836,147 840,195 846,253 849,310 853,348 860,310 866,330 873,318 882,358 889,300 895,345 903,330 908,350 914,315 922,345 932,340 942,345 950,360 957,320 962,385 970,375 978,395 986,390 995,362 1001,415 1008,395 1018,400 1028,400 1037,312 1043,365 1050,385 1055,330 1062,375 1073,418 1080,380 1086,385 1090,350 1096,365 1102,320 1108,310 1114,290 1122,285";
const average = "40,592 46,592 48,620 55,632 64,640 66,650 90,650 101,645 107,607 125,570 147,525 160,518 190,512 225,498 256,487 310,485 350,480 430,473 470,466 520,466 580,470 640,472 690,474 780,474 800,462 840,442 860,439 950,438 1050,435 1120,430";
const place = s => s.split(" ").map(p => {
  const [x, y] = p.split(",");
  return (2590 + x / 2.964).toFixed(1) + "," + (800 + y / 1.3754).toFixed(1);
}).join(" ");
day.push(`<polyline points="${place(trace)}" fill="none" stroke="#3c3c3c" stroke-width="2"/>`,
  `<polyline points="${place(average)}" fill="none" stroke="#1078c0" stroke-width="2"/>`);

// one bar per minute slot, r/g/m (mixed)
const flow = "g243 g68 m28 m38 m39 m40 r30 r44 m14 r30 r73 r80 g58 m38 m35 r48 r54 g38 r40 g22 g14 r14 r14 r14 r12 g9 r13 g12 g8 r14 g16 g26 g20 r14 g12 r29 r64 g18 g9 r12 g8 r18 r16 g12 m5 r12 g6 g36 r6 g14 r40 g9 g12 g6 r10 g8 g10 r27 r10 g12 r16 r8 g16 r12 g20 r8 r10 g8 r14 g10 r6 g8 r12 g6 r5 g8 g10 r6 r8 g9 r14 r18 r12 g8 r14 g6 r10 g8 r12 r8 g14 g8 r10 r6 g5 r8 r6 r10 r14 r12 r10 g5 r4 g4 r5 g3 g4 r4 g4 r6 g5 r8 g4 g6 r8 g14 r6 g8 r12 g16 r10 r27 g12 g18 r34 r32 g20 g14 r66 g36 r16 r18 g24 g44 r10 g8 g6 r8 r5 g6 r8 g5 g4 r6 r4 g5 r4 g6 g8 r10 g5 r18 g8 r6 g6 r12 r8 g14 r6 r16 g10 r18 g6 r27 r10 g12 r8 g12 r14 r8 g18 r24 r42 r20 r30";
flow.split(" ").forEach((f, i) => {
  const h = +f.slice(1);
  day.push(rect(2603.500 + i * 2.040, 1842 - h, 2.100, h, { r: "#f04040", g: GREEN, m: "#966038" }[f[0]]));
});
day.push(line(2968, 1774, 2968, 1842, "#333", 2));
fill("intraday", day);

/* ---------- annotations ---------- */
const notes = [];
[[2278, 2524, 195.400], [2198, 2406, 439.600], [1953, 2158, 744.600], [325, 2125, 833], [1523, 1800, 925.400], [449, 1636, 983.500]].forEach(([x1, x2, y]) =>
  notes.push(line(x1, y, x2 - 35, y, HOT, 6, 'stroke-linecap="round"'), `<path d="M${x2} ${y}l-53 14 12-14-12-14z" fill="#f00"/>`));
[[326.600, 923, 1279], [445.400, 1056, 1219], [1479.700, 1033, 1381], [1998.700, 892, 1247], [2037.400, 856, 1328], [2198.700, 507, 1297], [2278.500, 296, 1123]].forEach(([x, y1, y2]) =>
  notes.push(line(x, y1 + 35, x, y2, HOT, 6, 'stroke-linecap="round"'), `<path d="M${x} ${y1}l14 54-14-12-14 12z" fill="#f00"/>`));
[[1627, 1019], [1800, 955], [2141, 860], [2177, 762], [2405, 458], [2531.500, 215]].forEach(([x, y], i) =>
  notes.push(`<circle class="badge" cx="${x}" cy="${y}" r="18"/><text class="num" x="${x}" y="${y + 6.500}">${i + 1}</text>`));
// mouse pointer
notes.push(`<path d="M337 84v34l8-7 6 13 5-2-6-13h11z" fill="#fff" stroke="#111" stroke-width="1.300"/>`);
fill("notes", notes);
```
